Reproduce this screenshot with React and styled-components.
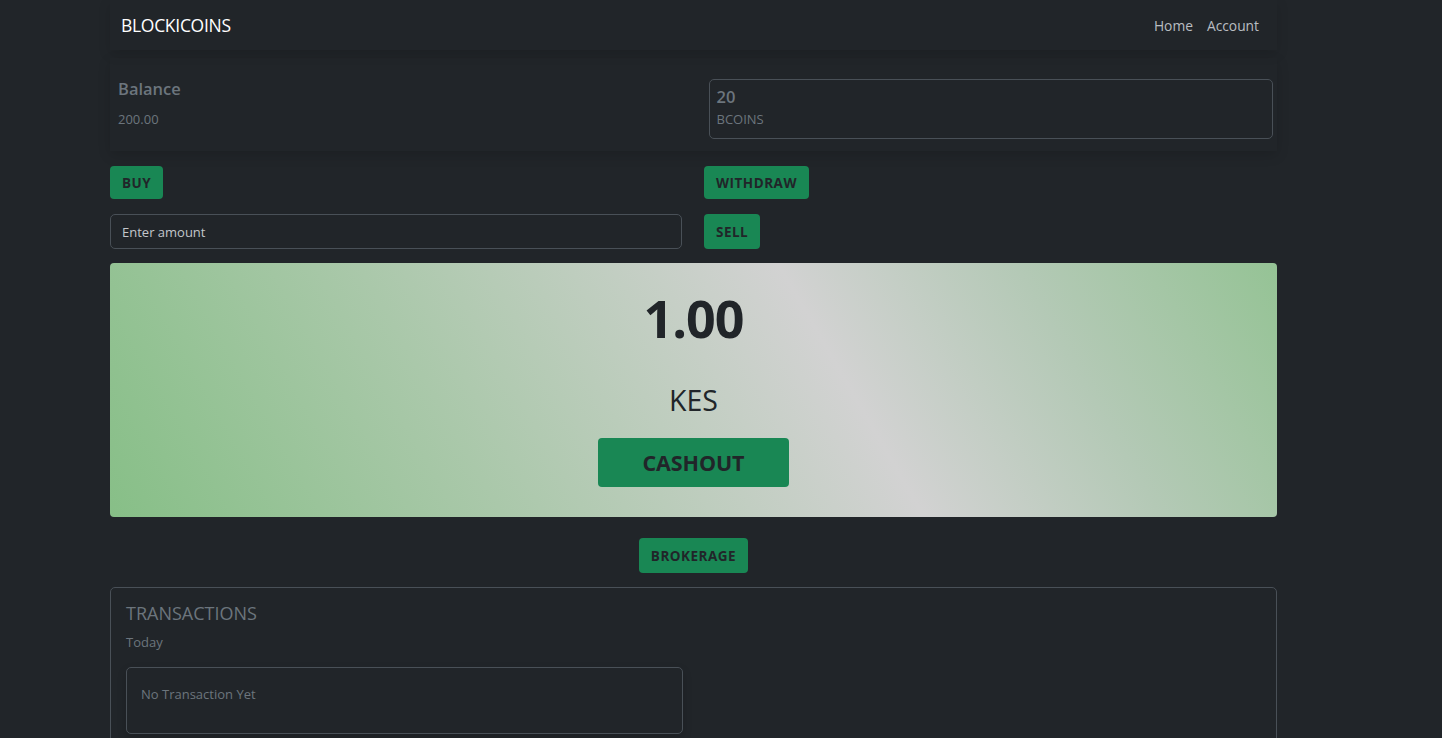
import styled, { createGlobalStyle } from "styled-components";

const GlobalStyle = createGlobalStyle`
    html, body {
        margin: 0;
        padding: 0;
        background-color: #212529;
        font-family: "Open Sans", "Noto Sans", sans-serif;
        color: #6c757d;
    }

    * {
        box-sizing: border-box;
    }
`;

const Page = styled.div`
    width: 1167px;
    margin-left: 110px;
    display: flex;
    flex-direction: column;
`;

const Navbar = styled.nav`
    height: 50px;
    display: flex;
    align-items: center;
    justify-content: space-between;
    padding: 0 18px 0 11px;
    box-shadow: 0 4px 12px rgba(0, 0, 0, 0.12);

    .brand {
        color: #ffffff;
        font-size: 17.5px;
        letter-spacing: -0.3px;
    }

    .links {
        display: flex;
        gap: 14px;
    }

    .links a {
        color: #b9bdc1;
        font-size: 13.8px;
        text-decoration: none;
    }
`;

const BalanceCard = styled.section`
    margin-top: 8px;
    display: grid;
    grid-template-columns: 1fr 1fr;
    column-gap: 22px;
    padding: 21px 4px 12px 8px;
    box-shadow: 0 4px 12px rgba(0, 0, 0, 0.14);
`;

const Stat = styled.div`
    display: flex;
    flex-direction: column;
    margin-left: ${props => props.boxed ? "2px" : "0"};
    padding: ${props => props.boxed ? "5px 7px 9px" : "0"};
    border: ${props => props.boxed ? "1px solid #495057" : "none"};
    border-radius: 5px;

    strong {
        font-size: 16.5px;
        font-weight: 600;
        line-height: ${props => props.boxed ? "24px" : "20px"};
        color: #6c757d;
    }

    span {
        font-size: 13px;
        line-height: 20px;
        margin-top: ${props => props.boxed ? "0" : "10px"};
        color: #6c757d;
    }
`;

const Actions = styled.div`
    margin-top: 15px;
    display: grid;
    grid-template-columns: 572px 1fr;
    column-gap: 22px;
    row-gap: 15px;
    align-items: start;
`;

const Button = styled.button`
    justify-self: ${props => props.center ? "center" : "start"};
    height: ${props => props.large ? "49px" : props.tall ? "35px" : "33px"};
    width: ${props => props.large ? "191px" : "auto"};
    padding: 0 12px;
    border: none;
    border-radius: 4px;
    background-color: #198754;
    color: #212529;
    font-family: "Open Sans", "Noto Sans", sans-serif;
    font-size: ${props => props.large ? "21.5px" : "13.5px"};
    font-weight: 700;
    letter-spacing: ${props => props.large ? "-0.1px" : "0.5px"};
    text-transform: uppercase;
    cursor: pointer;
`;

const AmountInput = styled.input`
    height: 35px;
    width: 100%;
    padding: 0 11px;
    border: 1px solid #495057;
    border-radius: 5px;
    background-color: #212529;
    color: #ced4da;
    font-family: "Open Sans", "Noto Sans", sans-serif;
    font-size: 13px;

    &::placeholder {
        color: #c3c7cb;
    }
`;

const RatePanel = styled.section`
    margin-top: 14px;
    height: 254px;
    border-radius: 4px;
    background: linear-gradient(60deg, #87bf87 0%, #aac8aa 30%, #d2d2d2 62%, #b4c9b6 80%, #95c395 100%);
    display: flex;
    flex-direction: column;
    align-items: center;
    color: #212529;

    .rate {
        margin-top: 25px;
        font-size: 52px;
        font-weight: 700;
        line-height: 60px;
        letter-spacing: -1px;
    }

    .currency {
        margin-top: 32px;
        font-size: 28.5px;
        line-height: 40px;
    }

    button {
        margin-top: 18px;
    }
`;

const BrokerRow = styled.div`
    margin-top: 21px;
    display: flex;
    justify-content: center;
`;

const TransactionsCard = styled.section`
    margin-top: 14px;
    border: 1px solid #495057;
    border-radius: 5px;
    padding: 13px 15px 40px;

    h3 {
        margin: 0;
        font-size: 18px;
        font-weight: 500;
        line-height: 24px;
        color: #6c757d;
    }

    .day {
        margin-top: 7px;
        font-size: 13px;
        line-height: 20px;
    }
`;

const EmptyBox = styled.div`
    margin-top: 15px;
    width: 557px;
    height: 67px;
    border: 1px solid #495057;
    border-radius: 5px;
    padding: 17px 14px;
    font-size: 13px;
    color: #6c757d;
    box-shadow: 0 4px 10px rgba(0, 0, 0, 0.15);
`;

export default function App() {

    return (
        <>
            <GlobalStyle />
            <Page>

                <Navbar>
                    <span className="brand">BLOCKICOINS</span>
                    <div className="links">
                        <a href="#home">Home</a>
                        <a href="#account">Account</a>
                    </div>
                </Navbar>

                <BalanceCard>
                    <Stat>
                        <strong>Balance</strong>
                        <span>200.00</span>
                    </Stat>
                    <Stat boxed>
                        <strong>20</strong>
                        <span>BCOINS</span>
                    </Stat>
                </BalanceCard>

                <Actions>
                    <Button>Buy</Button>
                    <Button>Withdraw</Button>
                    <AmountInput placeholder="Enter amount" />
                    <Button tall>Sell</Button>
                </Actions>

                <RatePanel>
                    <div className="rate">1.00</div>
                    <div className="currency">KES</div>
                    <Button large>Cashout</Button>
                </RatePanel>

                <BrokerRow>
                    <Button tall>Brokerage</Button>
                </BrokerRow>

                <TransactionsCard>
                    <h3>TRANSACTIONS</h3>
                    <div className="day">Today</div>
                    <EmptyBox>No Transaction Yet</EmptyBox>
                </TransactionsCard>

            </Page>
        </>
    );

};
